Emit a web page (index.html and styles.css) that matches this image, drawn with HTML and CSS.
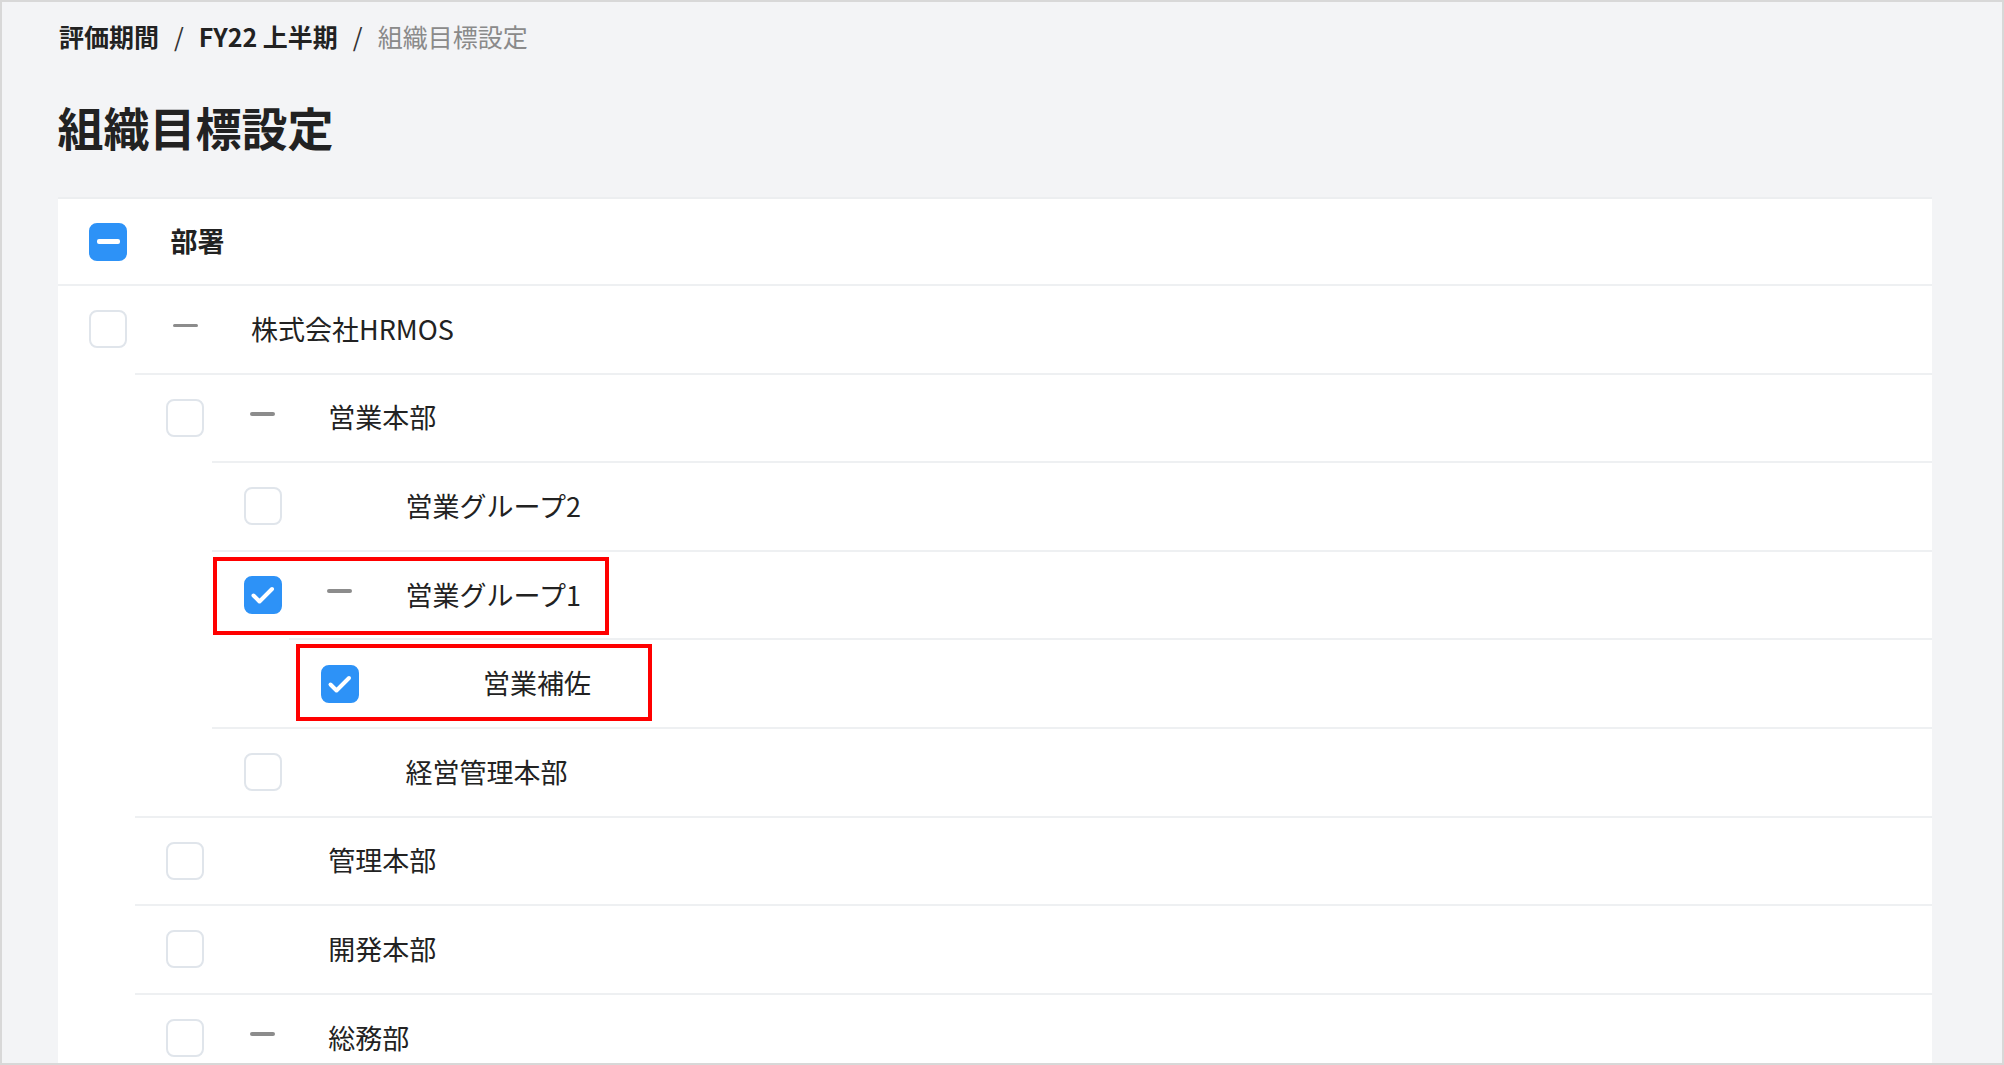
FILE: index.html
```html
<!DOCTYPE html>
<html lang="ja">
<head>
    <meta charset="UTF-8">
    <meta name="viewport" content="width=device-width, initial-scale=1.0">
    <title>組織目標設定</title>
    <link rel="stylesheet" href="styles.css">
</head>
<body>
    <div class="screen">
        <nav class="breadcrumb">
            <span class="crumb">評価期間</span>
            <span class="sep">/</span>
            <span class="crumb">FY22 上半期</span>
            <span class="sep">/</span>
            <span class="crumb current">組織目標設定</span>
        </nav>

        <h1 class="page-title">組織目標設定</h1>

        <div class="card">
            <div class="head-row">
                <span class="checkbox indeterminate"></span>
                <span class="head-label">部署</span>
            </div>

            <ul class="tree">
                <li>
                    <div class="row">
                        <span class="checkbox"></span>
                        <span class="toggle"></span>
                        <span class="label">株式会社HRMOS</span>
                    </div>
                    <ul class="tree">
                        <li>
                            <div class="row">
                                <span class="checkbox"></span>
                                <span class="toggle"></span>
                                <span class="label">営業本部</span>
                            </div>
                            <ul class="tree">
                                <li>
                                    <div class="row">
                                        <span class="checkbox"></span>
                                        <span class="toggle empty"></span>
                                        <span class="label">営業グループ2</span>
                                    </div>
                                </li>
                                <li>
                                    <div class="row">
                                        <span class="checkbox checked">
                                            <svg viewBox="0 0 38 38"><polyline points="9.5,19.5 15.5,25.5 28,13"/></svg>
                                        </span>
                                        <span class="toggle"></span>
                                        <span class="label">営業グループ1</span>
                                        <span class="mark mark-group"></span>
                                    </div>
                                    <ul class="tree">
                                        <li>
                                            <div class="row">
                                                <span class="checkbox checked">
                                                    <svg viewBox="0 0 38 38"><polyline points="9.5,19.5 15.5,25.5 28,13"/></svg>
                                                </span>
                                                <span class="toggle empty"></span>
                                                <span class="label">営業補佐</span>
                                                <span class="mark mark-sub"></span>
                                            </div>
                                        </li>
                                    </ul>
                                </li>
                                <li>
                                    <div class="row">
                                        <span class="checkbox"></span>
                                        <span class="toggle empty"></span>
                                        <span class="label">経営管理本部</span>
                                    </div>
                                </li>
                            </ul>
                        </li>
                        <li>
                            <div class="row">
                                <span class="checkbox"></span>
                                <span class="toggle empty"></span>
                                <span class="label">管理本部</span>
                            </div>
                        </li>
                        <li>
                            <div class="row">
                                <span class="checkbox"></span>
                                <span class="toggle empty"></span>
                                <span class="label">開発本部</span>
                            </div>
                        </li>
                        <li>
                            <div class="row">
                                <span class="checkbox"></span>
                                <span class="toggle"></span>
                                <span class="label">総務部</span>
                            </div>
                        </li>
                    </ul>
                </li>
            </ul>
        </div>
    </div>
</body>
</html>
```

FILE: styles.css
```css
body {
    margin: 0;
    font-family: "Noto Sans CJK JP", "Noto Sans", sans-serif;
    color: #222;
}

.screen {
    box-sizing: border-box;
    height: 1065px;
    border: 2px solid #d8d8d8;
    background: #f3f4f6;
    padding: 16px 70px 0 55.5px;
    overflow: hidden;
}

/* breadcrumb */
.breadcrumb {
    display: flex;
    align-items: center;
    font-size: 25px;
    line-height: 36px;
    padding-left: 1.5px;
}

.crumb {
    font-weight: 700;
}

.crumb.current {
    font-weight: 400;
    color: #8a8a8a;
}

.sep {
    margin: 0 15px;
    color: #333;
}

.page-title {
    margin: 40px 0 39px;
    font-size: 46px;
    line-height: 64px;
    font-weight: 700;
}

/* card + tree */
.card {
    background: #fff;
    border-top: 2px solid #eceef0;
}

.head-row {
    display: flex;
    align-items: center;
    height: 85px;
    padding-left: 31.5px;
}

.head-label {
    margin-left: 43.5px;
    margin-top: -2px;
    font-size: 27px;
    font-weight: 700;
}

.tree {
    list-style: none;
    margin: 0;
    padding: 0;
}

.tree .tree {
    padding-left: 77.3px;
}

.row {
    position: relative;
    box-sizing: border-box;
    display: flex;
    align-items: center;
    height: 88.6px;
    padding-left: 31.5px;
    border-top: 2px solid #eef0f2;
    font-size: 27px;
}

.label {
    margin-top: -2px;
    white-space: nowrap;
}

.checkbox {
    position: relative;
    flex: none;
    box-sizing: border-box;
    width: 38px;
    height: 38px;
    border: 2px solid #e0e5eb;
    border-radius: 8px;
    background: #fff;
}

.checkbox.checked,
.checkbox.indeterminate {
    border-color: #2d92f7;
    background: #2d92f7;
}

.checkbox.indeterminate::after {
    content: "";
    position: absolute;
    left: 5.5px;
    top: 14.5px;
    width: 23px;
    height: 5px;
    border-radius: 2px;
    background: #fff;
}

.checkbox svg {
    position: absolute;
    left: -2px;
    top: -2px;
    width: 38px;
    height: 38px;
    fill: none;
    stroke: #fff;
    stroke-width: 4;
    stroke-linecap: round;
    stroke-linejoin: round;
}

.toggle {
    flex: none;
    width: 25px;
    height: 3.5px;
    margin: -8px 53.5px 0 45.5px;
    border-radius: 2px;
    background: #8c8c8c;
}

.toggle.empty {
    background: transparent;
}

/* red annotation frames */
.mark {
    position: absolute;
    box-sizing: border-box;
    border: 4px solid #ff0000;
}

.mark-group {
    left: 1px;
    top: 5px;
    width: 396px;
    height: 78px;
}

.mark-sub {
    left: 6.5px;
    top: 3.5px;
    width: 356px;
    height: 77px;
}
```
